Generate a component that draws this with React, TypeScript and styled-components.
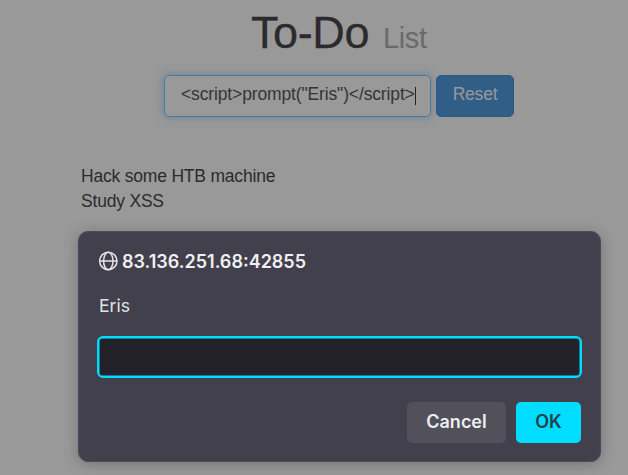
import React from "react";
import styled, { createGlobalStyle } from "styled-components";

const GlobalStyle = createGlobalStyle`
  * { box-sizing: border-box; }
  body { margin: 0; background: #99999a; overflow: hidden; }
`;

const Page = styled.main`
  position: relative;
  height: 475px;
  overflow: hidden;
  background: #99999a;
  color: #2b2b2d;
  font: 17.5px/25px "Liberation Sans", Arial, sans-serif;
  letter-spacing: -0.2px;
`;

const Title = styled.h1`
  display: flex;
  align-items: baseline;
  gap: 14px;
  height: 75px;
  margin: 0;
  padding: 8px 0 0 251px;
  font-size: 45px;
  font-weight: 400;
  line-height: 50px;
  letter-spacing: -0.4px;
  color: #2b2b2e;
  -webkit-text-stroke: 0.3px currentColor;
`;

const Subtitle = styled.small`
  font-size: 29px;
  line-height: 1;
  letter-spacing: -0.4px;
  color: #69696b;
  -webkit-text-stroke: 0;
`;

const TaskForm = styled.div`
  display: flex;
  gap: 5px;
  height: 42px;
  margin-left: 164px;
`;

const TaskInput = styled.div`
  display: flex;
  align-items: center;
  width: 267px;
  padding: 0 0 4px 16px;
  border: 1.5px solid #4779a3;
  border-radius: 5px;
  box-shadow: 0 0 10px rgba(61, 105, 145, 0.5);
  color: #343436;
  letter-spacing: -0.14px;
  white-space: nowrap;
`;

const Caret = styled.span`
  width: 1px;
  height: 18px;
  margin-top: 3px;
  background: #222224;
`;

const ResetButton = styled.button`
  width: 78px;
  padding: 0 0 4px;
  border: 1px solid #2d5983;
  border-radius: 5px;
  background: #315e87;
  color: #99999b;
  font: 17.5px "Liberation Sans", Arial, sans-serif;
  letter-spacing: -0.2px;
`;

const Tasks = styled.ul`
  margin: 46px 0 0 81px;
  padding: 1px 0 0;
  list-style: none;
`;

const Dialog = styled.section`
  position: absolute;
  left: 78px;
  top: 231px;
  display: flex;
  flex-direction: column;
  width: 523px;
  height: 231px;
  padding: 19px 19px 18px;
  border: 1px solid #4d4b57;
  border-radius: 10px;
  background: #42404c;
  box-shadow: 0 2px 14px rgba(20, 20, 25, 0.28);
  color: #f0f0f3;
  font: 17.6px/20px Inter, sans-serif;
  letter-spacing: 0;
`;

const Origin = styled.header`
  display: flex;
  align-items: center;
  gap: 4px;
  height: 20px;
  font-size: 18px;
  font-weight: 600;
`;

const OriginText = styled.span`
  padding-top: 2px;
`;

const Message = styled.label`
  margin: 25px 0 20px 1px;
  color: #e2e2e6;
`;

const PromptInput = styled.input`
  width: 485px;
  height: 43px;
  margin-left: -1px;
  padding: 0 10px;
  border: 2px solid #00ddff;
  border-radius: 6px;
  outline: none;
  background: #23222b;
  box-shadow: inset 0 0 0 0.5px #00ddff;
  color: #fbfbfe;
`;

const Actions = styled.footer`
  display: flex;
  justify-content: flex-end;
  gap: 10px;
  margin-top: 24px;
`;

const ActionButton = styled.button<{ $primary?: boolean }>`
  width: ${({ $primary }) => ($primary ? 65 : 99)}px;
  height: 41px;
  padding: 0 0 2px;
  border: 0;
  border-radius: 5px;
  background: ${({ $primary }) => ($primary ? "#00ddff" : "#51505b")};
  color: ${({ $primary }) => ($primary ? "#24434e" : "#eeeef1")};
  font: 600 18px Inter, sans-serif;
`;

const GlobeIcon = () => (
  <svg width="20" height="20" viewBox="0 0 20 20" fill="none" stroke="#e4e4e8" strokeWidth="1.5">
    <circle cx="10.3" cy="10" r="8.7" />
    <ellipse cx="10.3" cy="10" rx="4.7" ry="8.7" />
    <path d="M1.6 10H19" />
  </svg>
);

export default function App() {
  return (
    <>
      <GlobalStyle />
      <Page>
        <Title>To-Do <Subtitle>List</Subtitle></Title>
        <TaskForm>
          <TaskInput>
            <span>{'<script>prompt("Eris")</script>'}</span>
            <Caret />
          </TaskInput>
          <ResetButton>Reset</ResetButton>
        </TaskForm>
        <Tasks>
          <li>Hack some HTB machine</li>
          <li>Study XSS</li>
        </Tasks>
        <Dialog role="dialog">
          <Origin>
            <GlobeIcon />
            <OriginText>83.136.251.68:42855</OriginText>
          </Origin>
          <Message htmlFor="answer">Eris</Message>
          <PromptInput id="answer" />
          <Actions>
            <ActionButton>Cancel</ActionButton>
            <ActionButton $primary>OK</ActionButton>
          </Actions>
        </Dialog>
      </Page>
    </>
  );
}
